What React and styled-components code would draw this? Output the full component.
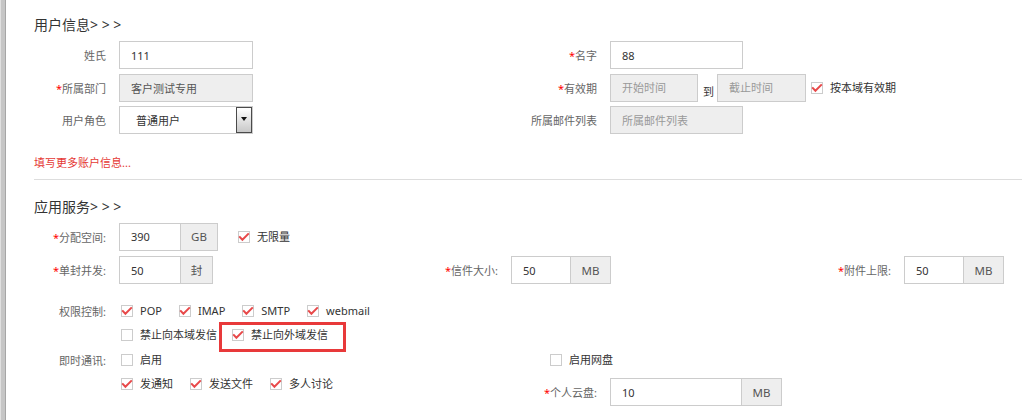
import styled, { createGlobalStyle, css } from "styled-components";

const GlobalStyle = createGlobalStyle`
  html, body {
    margin: 0;
    padding: 0;
    background: #fff;
  }
  body {
    font-family: "Noto Sans", "Noto Sans CJK SC", sans-serif;
    font-size: 11px;
    color: #333;
  }
  * {
    box-sizing: border-box;
  }
`;

const Page = styled.div`
  display: flex;
  height: 100vh;
  min-height: 420px;
  overflow: hidden;
`;

const Rail = styled.div`
  width: 6px;
  flex: none;
  background: #c6c6c6;
  border-left: 1px solid #e0e0e0;
  border-right: 1px solid #a6a6a6;
`;

const Main = styled.div`
  flex: 1;
  padding: 15px 0 0 15px;
`;

const Section = styled.section`
  padding-top: ${(p) => p.$top || 0}px;
`;

const Title = styled.h3`
  margin: 0 0 6px 13px;
  font-size: 14px;
  line-height: 20px;
  font-weight: normal;
  color: #333;
`;

const Rows = styled.div`
  display: flex;
  flex-direction: column;
  gap: ${(p) => p.$gap}px;
  margin-top: ${(p) => p.$top || 0}px;
`;

const Row = styled.div`
  display: flex;
  align-items: ${(p) => p.$align || "center"};
  min-height: ${(p) => p.$h || 28}px;
`;

const Field = styled.div`
  display: flex;
  align-items: center;
  flex: none;
  width: ${(p) => (p.$w ? p.$w + "px" : "auto")};
  margin-top: ${(p) => p.$top || 0}px;
`;

const Label = styled.span`
  width: 85px;
  margin-right: 13px;
  flex: none;
  text-align: right;
  white-space: nowrap;
  color: #666;
  font-size: 11px;
`;

const Req = styled.span`
  color: #f00;
`;

const TextInput = styled.input`
  width: ${(p) => p.$w}px;
  height: 28px;
  border: 1px solid #ccc;
  padding: 0 11px;
  font: inherit;
  font-size: 11px;
  color: ${(p) => (p.$grey ? "#555" : "#333")};
  background: ${(p) => (p.$grey ? "#eee" : "#fff")};
  outline: none;
  &::placeholder {
    color: #999;
  }
`;

const Group = styled.div`
  display: flex;
  height: 28px;
`;

const Addon = styled.span`
  width: ${(p) => p.$w}px;
  border: 1px solid #ccc;
  border-left: none;
  background: #eee;
  display: flex;
  align-items: center;
  justify-content: center;
  color: #555;
  font-size: 11.5px;
`;

const Select = styled.div`
  width: 134px;
  height: 28px;
  border: 1px solid #ccc;
  display: flex;
  align-items: stretch;
  background: #fff;
`;

const SelectText = styled.span`
  flex: 1;
  display: flex;
  align-items: center;
  padding-left: 16px;
  color: #333;
`;

const SelectButton = styled.span`
  width: 16px;
  border: 1px solid #4a4a4a;
  background: linear-gradient(#ffffff, #c8c8c8);
  display: flex;
  align-items: center;
  justify-content: center;
  &::after {
    content: "";
    border-left: 3.5px solid transparent;
    border-right: 3.5px solid transparent;
    border-top: 4px solid #111;
    margin-top: -2px;
  }
`;

const To = styled.span`
  align-self: flex-end;
  line-height: 16px;
  margin: 0 3px 2px 5px;
  color: #333;
`;

const MoreLink = styled.a`
  display: block;
  margin: 21px 0 0 13px;
  line-height: 16px;
  color: #e53935;
  text-decoration: none;
  font-size: 11px;
`;

const Divider = styled.hr`
  margin: 8px 0 0 13px;
  border: none;
  border-top: 1px solid #ddd;
  height: 0;
`;

const Checks = styled.div`
  display: flex;
  align-items: center;
  padding-left: 2px;
  height: 24px;
`;

const CheckItem = styled.span`
  display: inline-flex;
  align-items: center;
  line-height: 16px;
  margin-left: ${(p) => p.$left || 0}px;
  margin-right: ${(p) => (p.$right == null ? 17 : p.$right)}px;
  color: #333;
  white-space: nowrap;
  position: relative;
  ${(p) =>
    p.$marked &&
    css`
      &::after {
        content: "";
        position: absolute;
        left: -13px;
        right: -18px;
        top: -5px;
        bottom: -9px;
        border: 3px solid #e8393a;
        pointer-events: none;
      }
    `}
`;

const Box = styled.span`
  width: 12px;
  height: 12px;
  margin-right: 7px;
  border: 1px solid #ccc;
  background: #fff;
  flex: none;
  display: inline-flex;
  align-items: center;
  justify-content: center;
`;

function Check({ on, children, left, right, marked }) {
  return (
    <CheckItem $left={left} $right={right} $marked={marked}>
      <Box>
        {on && (
          <svg width="10" height="10" viewBox="0 0 10 10" overflow="visible">
            <polyline
              points="0.2,4.4 3.4,7.8 9.8,1.4"
              fill="none"
              stroke="#e8494a"
              strokeWidth="2"
            />
          </svg>
        )}
      </Box>
      {children}
    </CheckItem>
  );
}

function Lbl({ req, children }) {
  return (
    <Label>
      {req && <Req>*</Req>}
      {children}
    </Label>
  );
}

export default function App() {
  return (
    <Page>
      <GlobalStyle />
      <Rail />
      <Main>
        <Section>
          <Title>用户信息&gt; &gt; &gt;</Title>
          <Rows $gap={4.5}>
            <Row>
              <Field $w={491}>
                <Lbl>姓氏</Lbl>
                <TextInput $w={134} defaultValue="111" />
              </Field>
              <Field>
                <Lbl req>名字</Lbl>
                <TextInput $w={133} defaultValue="88" />
              </Field>
            </Row>
            <Row>
              <Field $w={491}>
                <Lbl req>所属部门</Lbl>
                <TextInput $w={134} $grey readOnly defaultValue="客户测试专用" />
              </Field>
              <Field>
                <Lbl req>有效期</Lbl>
                <TextInput $w={88} $grey readOnly placeholder="开始时间" />
                <To>到</To>
                <TextInput $w={89} $grey readOnly placeholder="截止时间" />
                <Check on left={5}>
                  按本域有效期
                </Check>
              </Field>
            </Row>
            <Row>
              <Field $w={491}>
                <Lbl>用户角色</Lbl>
                <Select>
                  <SelectText>普通用户</SelectText>
                  <SelectButton />
                </Select>
              </Field>
              <Field>
                <Lbl>所属邮件列表</Lbl>
                <TextInput $w={133} $grey readOnly placeholder="所属邮件列表" />
              </Field>
            </Row>
          </Rows>
          <MoreLink href="#">填写更多账户信息...</MoreLink>
          <Divider />
        </Section>

        <Section $top={16.5}>
          <Title>应用服务&gt; &gt; &gt;</Title>
          <Rows $gap={5.5}>
            <Row>
              <Field>
                <Lbl req>分配空间:</Lbl>
                <Group>
                  <TextInput $w={62} defaultValue="390" />
                  <Addon $w={37}>GB</Addon>
                </Group>
                <Check on left={20}>
                  无限量
                </Check>
              </Field>
            </Row>
            <Row>
              <Field $w={392}>
                <Lbl req>单封并发:</Lbl>
                <Group>
                  <TextInput $w={62} defaultValue="50" />
                  <Addon $w={32}>封</Addon>
                </Group>
              </Field>
              <Field $w={393}>
                <Lbl req>信件大小:</Lbl>
                <Group>
                  <TextInput $w={60} defaultValue="50" />
                  <Addon $w={40}>MB</Addon>
                </Group>
              </Field>
              <Field>
                <Lbl req>附件上限:</Lbl>
                <Group>
                  <TextInput $w={60} defaultValue="50" />
                  <Addon $w={40}>MB</Addon>
                </Group>
              </Field>
            </Row>
          </Rows>

          <Rows $gap={0.5} $top={14.5}>
            <Row $h={24}>
              <Field $w={491}>
                <Lbl>权限控制:</Lbl>
                <Checks>
                  <Check on>POP</Check>
                  <Check on>IMAP</Check>
                  <Check on>SMTP</Check>
                  <Check on>webmail</Check>
                </Checks>
              </Field>
            </Row>
            <Row $h={24}>
              <Field $w={491}>
                <Lbl />
                <Checks>
                  <Check right={15}>禁止向本域发信</Check>
                  <Check on marked>
                    禁止向外域发信
                  </Check>
                </Checks>
              </Field>
            </Row>
            <Row $h={24}>
              <Field $w={491}>
                <Lbl>即时通讯:</Lbl>
                <Checks>
                  <Check>启用</Check>
                </Checks>
              </Field>
              <Field>
                <Check left={38}>启用网盘</Check>
              </Field>
            </Row>
            <Row $h={24} $align="flex-start">
              <Field $w={491}>
                <Lbl />
                <Checks>
                  <Check on>发通知</Check>
                  <Check on>发送文件</Check>
                  <Check on>多人讨论</Check>
                </Checks>
              </Field>
              <Field $top={6}>
                <Lbl req>个人云盘:</Lbl>
                <Group>
                  <TextInput $w={132} defaultValue="10" />
                  <Addon $w={40}>MB</Addon>
                </Group>
              </Field>
            </Row>
          </Rows>
        </Section>
      </Main>
    </Page>
  );
}
